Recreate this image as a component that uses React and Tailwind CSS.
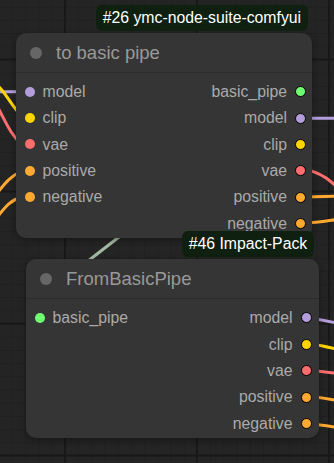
import React from 'react';

const COLORS = {
  model: '#b39ddb',
  clip: '#ffd500',
  vae: '#ff6e6e',
  positive: '#ffa931',
  negative: '#ffa931',
  basic_pipe: '#70ff70',
};

function InputSlot({ name }) {
  return (
    <div className="flex h-[26.4px] items-center">
      <span
        className="ml-[8.5px] h-[10px] w-[10px] rounded-full"
        style={{ backgroundColor: COLORS[name] }}
      />
      <span className="ml-[8px] text-[15.8px] text-[#aaaaaa]">{name}</span>
    </div>
  );
}

function OutputSlot({ name }) {
  return (
    <div className="flex h-[26.4px] items-center justify-end">
      <span className="mr-[8px] text-[15.8px] text-[#aaaaaa]">{name}</span>
      <span
        className="h-[11px] w-[11px] rounded-full border border-black"
        style={{ backgroundColor: COLORS[name] }}
      />
    </div>
  );
}

function Node({ title, inputs, outputs, className, outRight }) {
  return (
    <div className={`absolute rounded-[10px] bg-[#353535] shadow-[0_2px_6px_rgba(0,0,0,0.35)] ${className}`}>
      <div className="flex h-[40px] items-center border-b border-[#2b2b2b]">
        <span className="ml-[14px] h-[12px] w-[12px] rounded-full bg-[#666666]" />
        <span className="ml-[14px] text-[18.5px] text-[#999999]">{title}</span>
      </div>
      <div className="flex pb-[1px] pt-[5.5px]">
        <div className="flex-1">
          {inputs.map((n) => (
            <InputSlot key={n} name={n} />
          ))}
        </div>
        <div className={`flex-1 ${outRight}`}>
          {outputs.map((n) => (
            <OutputSlot key={n} name={n} />
          ))}
        </div>
      </div>
    </div>
  );
}

function Badge({ text, className }) {
  return (
    <div
      className={`absolute flex h-[26px] items-center rounded-[6px] bg-[#102010] px-[7px] text-[15.8px] text-white ${className}`}
    >
      {text}
    </div>
  );
}

function Canvas() {
  return (
    <svg className="absolute inset-0" width="334" height="463">
      <defs>
        <pattern id="fine" x="-1" y="6.7" width="13.2" height="13.2" patternUnits="userSpaceOnUse">
          <path d="M0 0 H13.2 M0 0 V13.2" stroke="#1c1c1c" strokeWidth="1" fill="none" />
        </pattern>
      </defs>
      <rect width="334" height="463" fill="#242424" />
      <rect width="334" height="463" fill="url(#fine)" />
      <path
        d="M65 0 V463 M197 0 V463 M329 0 V463 M0 59.5 H334 M0 191.5 H334 M0 323.5 H334 M0 455.5 H334"
        stroke="#181818"
        strokeWidth="2"
      />
      <g fill="none" strokeWidth="3" strokeLinecap="round">
        {/* into to basic pipe */}
        <path d="M-2 91.7 L22 91.7" stroke="#b39ddb" />
        <path d="M-4 84 C6 92, 11 106, 22 116" stroke="#ffd500" />
        <path d="M-3 106 C5 120, 10 134, 22 145" stroke="#ff6e6e" />
        <path d="M-2 192 C6 182, 11 176, 22 171" stroke="#ffa931" />
        <path d="M-2 216 C6 206, 11 200, 22 197" stroke="#ffa931" />
        {/* out of to basic pipe */}
        <path d="M305 118.3 L340 118.3" stroke="#b39ddb" />
        <path d="M305 170 C318 171, 328 178, 338 188" stroke="#ff6e6e" />
        <path d="M305 197 L340 196" stroke="#ffa931" />
        <path d="M305 223 C316 223, 326 221, 340 219" stroke="#ffa931" />
        {/* basic_pipe link */}
        <path d="M70 275 L128 230" stroke="#a3b8a3" />
        {/* out of FromBasicPipe */}
        <path d="M310 318.7 C320 319, 328 321, 340 324" stroke="#b39ddb" />
        <path d="M310 344.3 C320 345, 328 347, 340 350" stroke="#ffd500" />
        <path d="M310 370.7 C320 371, 328 372, 340 374" stroke="#ff6e6e" />
        <path d="M310 396.7 C320 397, 328 399, 340 401" stroke="#ffa931" />
        <path d="M310 424 C320 424.5, 328 426, 340 428" stroke="#ffa931" />
      </g>
    </svg>
  );
}

export default function App() {
  return (
    <div className="relative h-[463px] w-[334px] overflow-hidden font-['Liberation_Sans',Arial,sans-serif]">
      <Canvas />
      <Node
        title="to basic pipe"
        inputs={['model', 'clip', 'vae', 'positive', 'negative']}
        outputs={['basic_pipe', 'model', 'clip', 'vae', 'positive', 'negative']}
        className="left-[16px] top-[33px] w-[296px]"
        outRight="pr-[6px]"
      />
      <Badge text="#26 ymc-node-suite-comfyui" className="left-[95.7px] top-[4.7px]" />
      <Badge text="#46 Impact-Pack" className="left-[181.7px] top-[230.7px]" />
      <Node
        title="FromBasicPipe"
        inputs={['basic_pipe']}
        outputs={['model', 'clip', 'vae', 'positive', 'negative']}
        className="left-[26px] top-[259.3px] w-[292.5px]"
        outRight="pr-[7px]"
      />
    </div>
  );
}
